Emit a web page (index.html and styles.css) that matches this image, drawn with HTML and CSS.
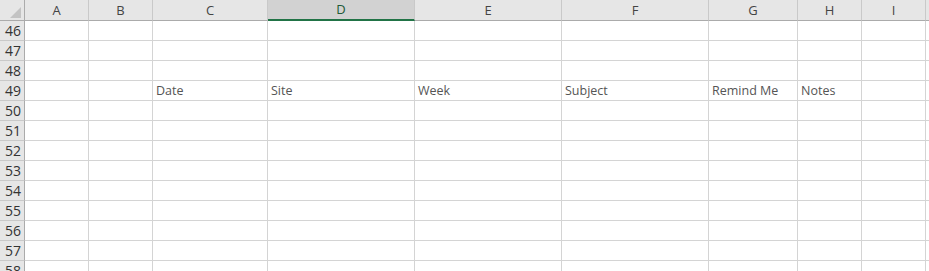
FILE: index.html
```html
<html>

<head>
    <meta charset="utf-8">
    <link rel="stylesheet" href="styles.css">
</head>

<body>
    <div class="sheet" id="sheet">
        <div class="corner"><span class="tri"></span></div>
        <div class="colhead">A</div>
        <div class="colhead">B</div>
        <div class="colhead">C</div>
        <div class="colhead selected">D</div>
        <div class="colhead">E</div>
        <div class="colhead">F</div>
        <div class="colhead">G</div>
        <div class="colhead">H</div>
        <div class="colhead">I</div>
        <div class="colhead filler"></div>
    </div>

    <script>
        const sheet = document.getElementById("sheet");
        const labels = { 49: ["", "", "Date", "Site", "Week", "Subject", "Remind Me", "Notes", ""] };

        for (let row = 46; row <= 58; row++) {
            const head = document.createElement("div");
            head.className = "rowhead";
            head.textContent = row;
            sheet.appendChild(head);
            for (let c = 0; c < 9; c++) {
                const cell = document.createElement("div");
                cell.className = "cell";
                cell.textContent = labels[row] ? labels[row][c] : "";
                sheet.appendChild(cell);
            }
            const filler = document.createElement("div");
            filler.className = "cell filler";
            sheet.appendChild(filler);
        }
    </script>
</body>

</html>
```

FILE: styles.css
```css
html {
    background-color: white;
}

body {
    margin: 0;
    width: 929px;
    height: 271px;
    overflow: hidden;
    font-family: "Open Sans", "Noto Sans", sans-serif;
}

.sheet {
    display: grid;
    grid-template-columns: 25px 64px 64px 115px 147px 147px 147px 89px 64px 64px 20px;
    grid-auto-rows: 20px;
    grid-template-rows: 21px;
}

.corner {
    position: relative;
    background-color: #e6e6e6;
    border-right: 1px solid #ababab;
    border-bottom: 1px solid #ababab;
}

.tri {
    position: absolute;
    left: 10px;
    top: 7px;
    width: 11px;
    height: 11px;
    background-color: #c3c3c3;
    clip-path: polygon(100% 0, 100% 100%, 0 100%);
}

.colhead {
    background-color: #e6e6e6;
    border-right: 1px solid #c9c9c9;
    border-bottom: 1px solid #ababab;
    color: #444;
    font-size: 13px;
    line-height: 20px;
    text-align: center;
}

.colhead.selected {
    background-color: #d2d2d2;
    color: #215a36;
    border-bottom: 2px solid #217346;
    line-height: 19px;
}

.colhead.filler {
    border-right: none;
}

.rowhead {
    background-color: #e6e6e6;
    border-right: 1px solid #ababab;
    border-bottom: 1px solid #c9c9c9;
    color: #333;
    font-size: 14px;
    line-height: 19px;
    text-align: right;
    padding-right: 3px;
}

.cell {
    border-right: 1px solid #d4d4d4;
    border-bottom: 1px solid #d4d4d4;
    color: #555;
    font-size: 12.5px;
    line-height: 20px;
    padding-left: 3px;
    white-space: nowrap;
    overflow: hidden;
}

.cell.filler {
    border-right: none;
}
```
